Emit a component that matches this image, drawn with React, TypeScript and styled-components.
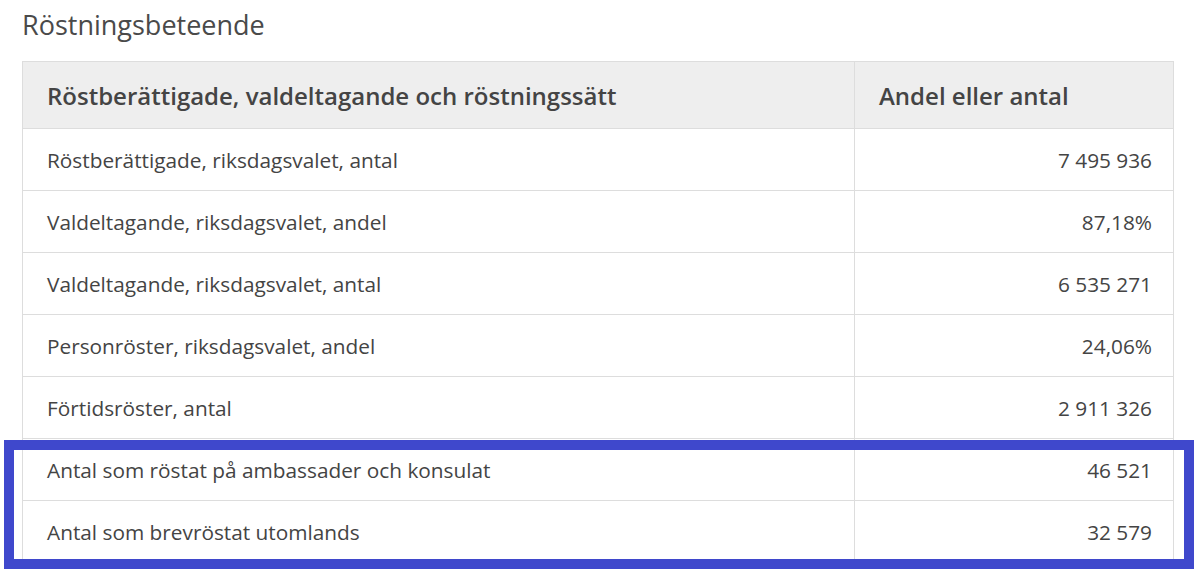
import React from "react"
import styled, { createGlobalStyle } from "styled-components"

const GlobalStyle = createGlobalStyle`
  html, body {
    margin: 0;
    padding: 0;
    background: #ffffff;
    font-family: "Open Sans", "Noto Sans", sans-serif;
    color: #444444;
  }
`

const Page = styled.div`
  position: relative;
  padding: 8px 25px 0 22px;
  width: 1198px;
  height: 578px;
  box-sizing: border-box;
  overflow: hidden;
`

const Title = styled.h2`
  margin: 0 0 19px 0;
  font-size: 27px;
  font-weight: 400;
  line-height: 34px;
  color: #4a4a4a;
`

const Table = styled.table`
  width: 1152px;
  border-collapse: collapse;
  table-layout: fixed;
`

const HeadCell = styled.th<{ $right?: boolean }>`
  box-sizing: border-box;
  background: #eeeeee;
  border: 1px solid #dddddd;
  height: 67px;
  padding: 0 24px;
  text-align: left;
  font-size: 24px;
  font-weight: 600;
  color: #444444;
  width: ${(p) => (p.$right ? "319px" : "auto")};
`

const Cell = styled.td<{ $num?: boolean }>`
  box-sizing: border-box;
  border: 1px solid #dddddd;
  height: 62px;
  padding: 0 ${(p) => (p.$num ? "21px" : "24px")};
  text-align: ${(p) => (p.$num ? "right" : "left")};
  font-size: 20.8px;
  color: #444444;
`

/* hand-drawn annotation frame laid over the last two rows */
const Marker = styled.div`
  position: absolute;
  left: 4px;
  top: 440px;
  width: 1190px;
  height: 129px;
  box-sizing: border-box;
  border: 10px solid #3f48cc;
  pointer-events: none;
`

const rows = [
  ["Röstberättigade, riksdagsvalet, antal", "7 495 936"],
  ["Valdeltagande, riksdagsvalet, andel", "87,18%"],
  ["Valdeltagande, riksdagsvalet, antal", "6 535 271"],
  ["Personröster, riksdagsvalet, andel", "24,06%"],
  ["Förtidsröster, antal", "2 911 326"],
  ["Antal som röstat på ambassader och konsulat", "46 521"],
  ["Antal som brevröstat utomlands", "32 579"]
]

export default function App() {
  return (
    <>
      <GlobalStyle />
      <Page>
        <Title>Röstningsbeteende</Title>
        <Table>
          <thead>
            <tr>
              <HeadCell>Röstberättigade, valdeltagande och röstningssätt</HeadCell>
              <HeadCell $right>Andel eller antal</HeadCell>
            </tr>
          </thead>
          <tbody>
            {rows.map(([label, value]) => (
              <tr key={label}>
                <Cell>{label}</Cell>
                <Cell $num>{value}</Cell>
              </tr>
            ))}
          </tbody>
        </Table>
        <Marker />
      </Page>
    </>
  )
}
